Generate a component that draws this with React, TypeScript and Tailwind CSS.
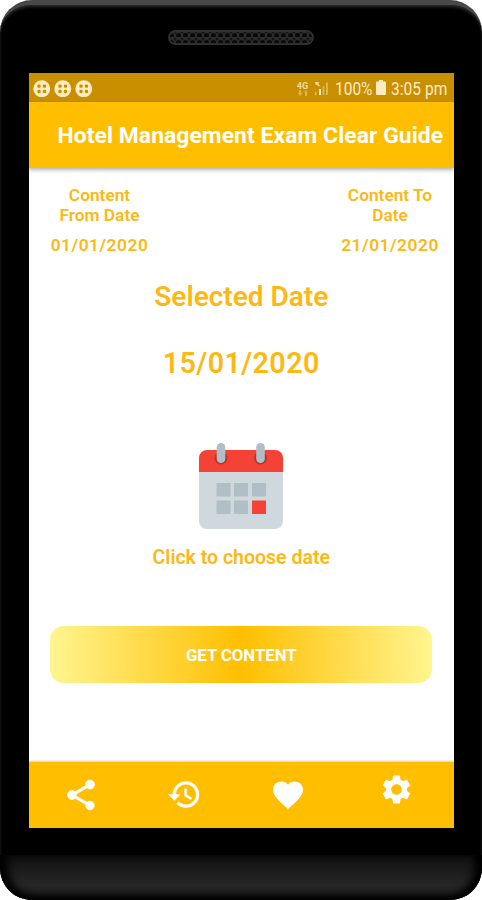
import React, { useState } from 'react';
import { MdShare, MdHistory, MdFavorite, MdSettings } from 'react-icons/md';

const StatusDot: React.FC = () => (
  <svg viewBox="0 0 18 18" className="w-[17.5px] h-[17.5px]">
    <circle cx="9" cy="9" r="8.7" fill="#fdebc2" />
    <g fill="#c88f00">
      <rect x="4.5" y="4.5" width="3.4" height="3.4" rx="1.3" />
      <rect x="10.1" y="4.5" width="3.4" height="3.4" rx="1.3" />
      <rect x="4.5" y="10.1" width="3.4" height="3.4" rx="1.3" />
      <rect x="10.1" y="10.1" width="3.4" height="3.4" rx="1.3" />
    </g>
  </svg>
);

const StatusBar: React.FC = () => (
  <div className="h-[29px] shrink-0 bg-[#c88f00] flex items-center justify-between pl-[4.5px] pr-[7px] pt-0.5 text-[#fdebc2]">
    <div className="flex gap-[3.7px]">
      <StatusDot />
      <StatusDot />
      <StatusDot />
    </div>
    <div className="flex items-center">
      <div className="w-[15px] mr-[4px] flex flex-col items-center">
        <span className="text-[9px] leading-[8px] font-bold opacity-80">4G</span>
        <svg viewBox="0 0 10 6" className="w-[10px] h-[6px]" fill="#fdebc2" opacity="0.4">
          <path d="M1 0h2v3h1.5L2 6 0 3h1zM7 6h2V3h1L8 0 6 3h1z" />
        </svg>
      </div>
      <svg viewBox="0 0 15 15" className="w-[15px] h-[15px] mr-[6px]" fill="#fdebc2">
        <path d="M1 1h4v1.500H3.500L5.500 4v1.500L1.500 3.500z" opacity="0.8" />
        <rect x="1" y="11" width="1.5" height="3" opacity="0.5" />
        <rect x="5" y="8" width="2" height="6" />
        <rect x="8.500" y="5" width="2" height="9" opacity="0.4" />
        <rect x="12" y="1.500" width="2" height="12.500" opacity="0.4" />
      </svg>
      <span className="w-[37px] text-[18px] leading-none whitespace-nowrap">
        <span className="block origin-left scale-x-[0.86]">100%</span>
      </span>
      <svg viewBox="0 0 10 15" className="w-[10px] h-[15px] ml-[4px] mr-[4.5px] mb-0.5" fill="#fdebc2">
        <path d="M3 0h4v1.500h2a1 1 0 0 1 1 1V14a1 1 0 0 1-1 1H1a1 1 0 0 1-1-1V2.500a1 1 0 0 1 1-1h2z" />
      </svg>
      <span className="w-[56.5px] text-[18px] leading-none whitespace-nowrap">
        <span className="block origin-left scale-x-[0.865]">3:05 pm</span>
      </span>
    </div>
  </div>
);

const CalendarIcon: React.FC = () => (
  <svg viewBox="0 0 86 87" className="w-[86px] h-[87px]">
    <path d="M1 26h84v52a8 8 0 0 1-8 8H9a8 8 0 0 1-8-8z" fill="#cfd8dc" />
    <path d="M1 29V15a8 8 0 0 1 8-8h68a8 8 0 0 1 8 8v14z" fill="#f44336" />
    <circle cx="23" cy="15" r="6.500" fill="#b43531" />
    <circle cx="62.500" cy="15" r="6.500" fill="#b43531" />
    <rect x="18.700" y="0" width="8.600" height="20" rx="4.300" fill="#b0bec5" />
    <rect x="58.200" y="0" width="8.600" height="20" rx="4.300" fill="#b0bec5" />
    <g fill="#b0bec5">
      <rect x="18.500" y="40" width="14" height="13.500" />
      <rect x="36" y="40" width="14" height="13.500" />
      <rect x="54" y="40" width="14" height="13.500" />
      <rect x="18.500" y="57.500" width="14" height="13.500" />
      <rect x="36" y="57.500" width="14" height="13.500" />
    </g>
    <rect x="54" y="57.500" width="14" height="13.500" fill="#f44336" />
  </svg>
);

const Speaker: React.FC = () => (
  <svg viewBox="0 0 146 15" className="w-[146px] h-[15px]">
    <defs>
      <pattern id="mesh" width="7" height="7" patternUnits="userSpaceOnUse">
        <rect width="7" height="7" fill="#2b2b2b" />
        <circle cx="3.500" cy="5.500" r="2.500" fill="#0a0a0a" />
        <circle cx="0" cy="2" r="1.500" fill="#151515" />
        <circle cx="7" cy="2" r="1.500" fill="#151515" />
      </pattern>
    </defs>
    <rect x="1" y="1" width="144" height="13" rx="6.500" fill="url(#mesh)" stroke="#303030" strokeWidth="1.800" />
  </svg>
);

const App: React.FC = () => {
  const [active, setActive] = useState('');

  const tabs = [
    { id: 'share', icon: <MdShare size={36} className="[&>path:last-child]:[stroke-width:0.4]" />, style: 'ml-[34px]' },
    { id: 'history', icon: <MdHistory size={35} className="[&>path:last-child]:[stroke-width:0.3]" />, style: 'ml-[68px] mb-0.5' },
    { id: 'favorite', icon: <MdFavorite size={36} />, style: 'ml-[68px]' },
    { id: 'settings', icon: <MdSettings size={35} />, style: 'ml-[73px] mb-[11px]' },
  ];

  return (
    <div className="w-[482px] h-[900px] bg-white overflow-hidden font-[Roboto,sans-serif]">
      <div className="h-full rounded-[32px] bg-black border-t-[5px] border-[#484848] flex flex-col overflow-hidden shadow-[inset_0_2px_3px_#2a2a2a]">
        <div className="h-[68px] shrink-0 flex justify-center pt-[25px]">
          <Speaker />
        </div>

        <div className="ml-[28.5px] w-[425.5px] h-[755px] shrink-0 bg-white flex flex-col">
          <StatusBar />
          <header className="h-[66px] shrink-0 bg-[#ffbf00] flex items-center pl-[29px] pt-[3px] shadow-[0_2px_4px_rgba(0,0,0,0.3)]">
            <h1 className="text-white text-[22.8px] font-bold whitespace-nowrap tracking-[0.1px]">Hotel Management Exam Clear Guide</h1>
          </header>

          <main className="flex-1 flex flex-col items-center text-[#fdb813] font-semibold">
            <div className="w-full flex justify-between pl-[17px] pr-[10px] pt-[18px] text-center text-[17.300px] leading-[19.500px]">
              <div className="w-[108px]">
                <p>Content<br />From Date</p>
                <p className="mt-[11px] tracking-[0.55px]">01/01/2020</p>
              </div>
              <div className="w-[108px]">
                <p>Content To<br />Date</p>
                <p className="mt-[11px] tracking-[0.55px]">21/01/2020</p>
              </div>
            </div>

            <h2 className="mt-[23px] text-[28px] leading-[36px]">Selected Date</h2>
            <p className="mt-[30px] text-[28.700px] leading-[36px] tracking-[0.4px]">15/01/2020</p>

            <button className="mt-[62.500px] flex flex-col items-center">
              <CalendarIcon />
              <span className="mt-[16px] text-[19.500px] leading-[24px]">Click to choose date</span>
            </button>

            <button className="mt-[56px] w-[382px] h-[57px] rounded-[14px] bg-[linear-gradient(90deg,#fff590,#ffbf00_50%,#fff590)] pt-[3px] text-white text-[16.700px] font-bold">
              GET CONTENT
            </button>
          </main>

          <nav className="h-[66px] shrink-0 bg-[#ffbf00] flex items-center text-white shadow-[0_-1px_2px_rgba(0,0,0,0.2)]">
            {tabs.map((tab) => (
              <button key={tab.id} className={tab.style} aria-pressed={active === tab.id} onClick={() => setActive(tab.id)}>
                {tab.icon}
              </button>
            ))}
          </nav>
        </div>

        <div className="mt-[27px] flex-1 rounded-b-[30px] bg-[linear-gradient(#101010,#262626_65%,#222)] shadow-[inset_8px_-3px_9px_#000,inset_-8px_-3px_9px_#000]" />
      </div>
    </div>
  );
};

export default App;
